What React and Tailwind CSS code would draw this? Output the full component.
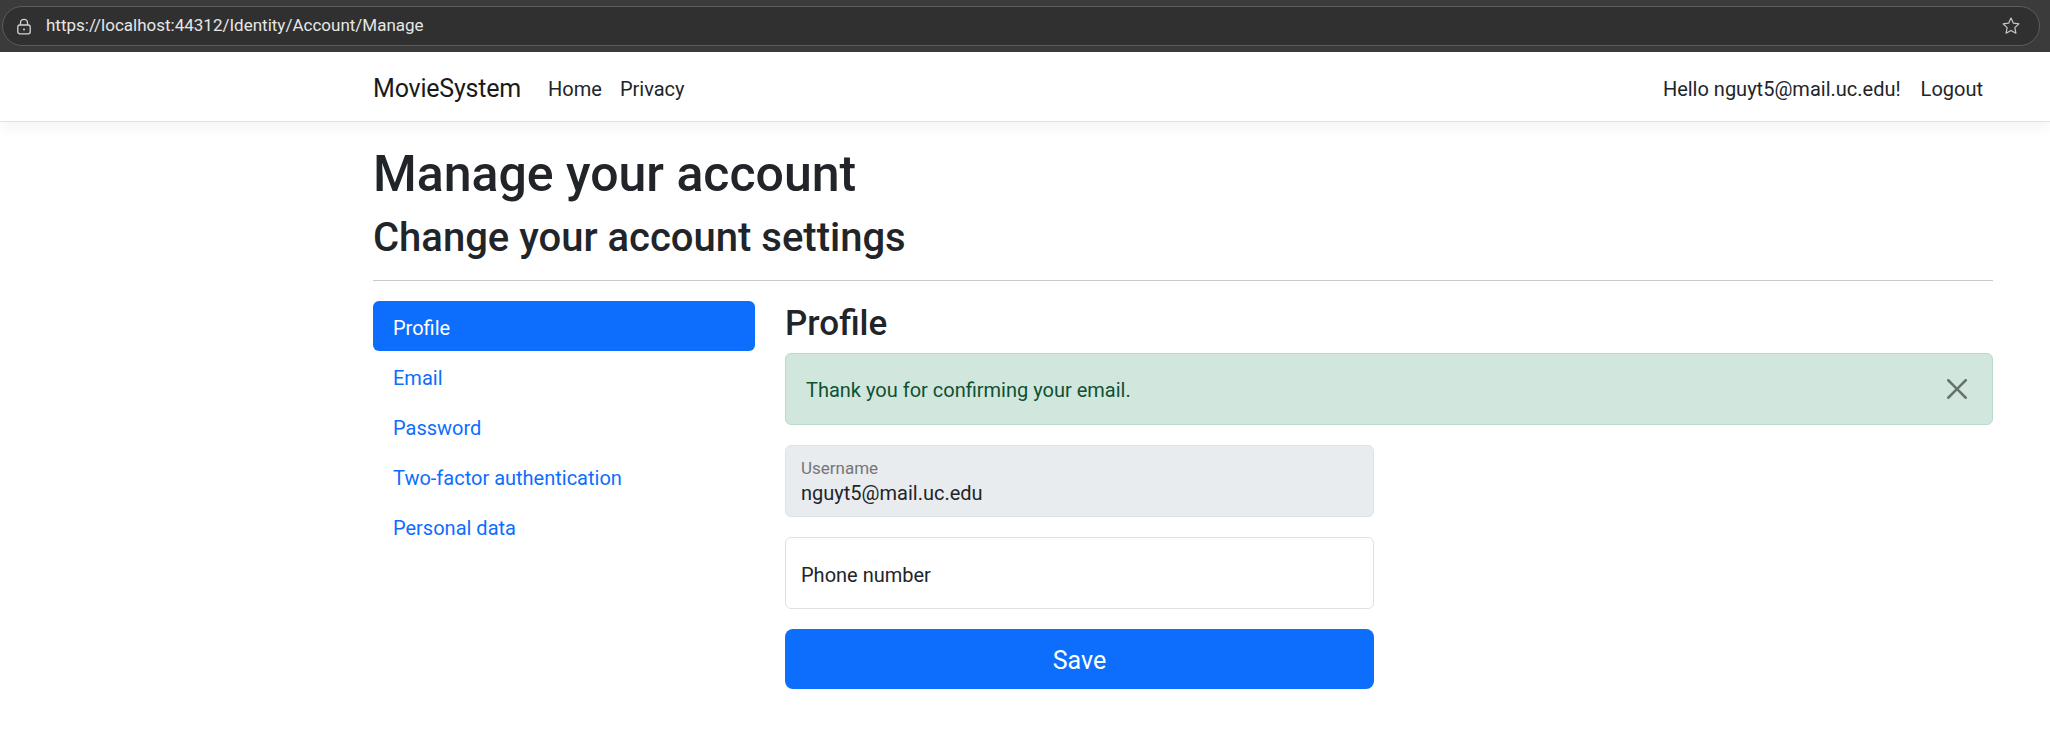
const menu = ['Profile', 'Email', 'Password', 'Two-factor authentication', 'Personal data'];

function LockIcon() {
  return (
    <svg width="16" height="17" viewBox="0 0 16 17" fill="none" stroke="#d4d4d4" strokeWidth="1.3">
      <path d="M4.5 7V4.8a3.5 3.5 0 0 1 7 0V7" />
      <rect x="1.8" y="7" width="12.4" height="8.8" rx="2" />
      <circle cx="8" cy="11.4" r="1" fill="#d4d4d4" stroke="none" />
    </svg>
  );
}

function StarIcon() {
  return (
    <svg width="20" height="20" viewBox="0 0 24 24" fill="none" stroke="#c9c9c9" strokeWidth="1.4" strokeLinejoin="round">
      <path d="M12 2.5l2.9 6.1 6.6.8-4.9 4.6 1.3 6.6L12 17.3l-5.9 3.3 1.3-6.6-4.9-4.6 6.6-.8z" />
    </svg>
  );
}

function CloseIcon() {
  return (
    <svg width="20" height="20" viewBox="0 0 16 16" className="opacity-50">
      <path
        fill="#000"
        d="M.293.293a1 1 0 0 1 1.414 0L8 6.586 14.293.293a1 1 0 1 1 1.414 1.414L9.414 8l6.293 6.293a1 1 0 0 1-1.414 1.414L8 9.414l-6.293 6.293a1 1 0 0 1-1.414-1.414L6.586 8 .293 1.707a1 1 0 0 1 0-1.414z"
      />
    </svg>
  );
}

export default function App() {
  return (
    <div className="min-h-screen bg-white font-['Roboto','Liberation_Sans',sans-serif] text-[#212529]">
      {/* browser chrome */}
      <div className="flex h-[52px] items-center bg-[#3b3b3b] px-[2px]">
        <div className="flex h-[40px] w-[2038px] items-center rounded-full border border-[#5c5c5c] bg-[#303030] pl-[13px] pr-[18px]">
          <LockIcon />
          <span className="ml-[14px] flex-1 text-[17px] text-[#e6e6e6]">
            https://localhost:44312/Identity/Account/Manage
          </span>
          <StarIcon />
        </div>
      </div>

      {/* navbar */}
      <nav className="h-[70px] border-b border-[#dee2e6] bg-white shadow-[0_5px_15px_rgba(0,0,0,0.05)]">
        <div className="ml-[373px] flex h-full w-[1620px] items-center justify-between pt-[4px]">
          <div className="flex items-center">
            <span className="mr-[17px] text-[25px] leading-[37px] tracking-[-0.2px] text-[#1a1a1a]">MovieSystem</span>
            <a className="px-[10px] text-[20px] leading-[30px]">Home</a>
            <a className="px-[8px] text-[20px] leading-[30px]">Privacy</a>
          </div>
          <div className="flex items-center">
            <a className="px-[10px] text-[20px] leading-[30px]">Hello nguyt5@mail.uc.edu!</a>
            <a className="px-[10px] text-[20px] leading-[30px]">Logout</a>
          </div>
        </div>
      </nav>

      <main className="ml-[373px] w-[1620px] pt-[20px] pb-[20px]">
        <h1 className="mb-[10px] pt-[5px] text-[50px] font-medium leading-[55px]">Manage your account</h1>
        <h2 className="mb-[10px] pt-[4px] text-[40px] font-medium leading-[44px]">Change your account settings</h2>
        <hr className="my-[20px] border-t border-[#c8c9ca]" />

        <div className="flex gap-[30px]">
          <ul className="flex w-[382px] flex-col">
            {menu.map((item, i) => (
              <li
                key={item}
                className={`flex h-[50px] items-center rounded-[6px] px-[20px] pt-[3px] text-[20px] ${
                  i === 0 ? 'bg-[#0d6efd] text-white' : 'text-[#0d6efd]'
                }`}
              >
                {item}
              </li>
            ))}
          </ul>

          <div className="flex-1">
            <h3 className="mb-[10px] pt-[4px] text-[35px] font-medium leading-[38px]">Profile</h3>

            <div className="relative mb-[20px] rounded-[6px] border border-[#badbcc] bg-[#d1e7dd] pt-[21px] pb-[19px] pl-[20px] pr-[60px] text-[20px] leading-[30px] text-[#0f5132]">
              Thank you for confirming your email.
              <button className="absolute right-[25px] top-[25px] flex h-[20px] w-[20px] items-center justify-center">
                <CloseIcon />
              </button>
            </div>

            <div className="flex w-[589px] flex-col gap-[20px]">
              <div className="flex h-[72px] flex-col rounded-[6px] border border-[#dee2e6] bg-[#e9ecef] pl-[15px]">
                <span className="mt-[10px] text-[17px] leading-[24px] text-[#74777a]">Username</span>
                <span className="text-[20px] leading-[27px]">nguyt5@mail.uc.edu</span>
              </div>

              <div className="flex h-[72px] items-center rounded-[6px] border border-[#dee2e6] bg-white pl-[15px] pt-[3px] text-[20px]">
                Phone number
              </div>

              <button className="h-[60px] w-full rounded-[8px] bg-[#0d6efd] pt-[3px] text-[25px] text-white">Save</button>
            </div>
          </div>
        </div>
      </main>
    </div>
  );
}
